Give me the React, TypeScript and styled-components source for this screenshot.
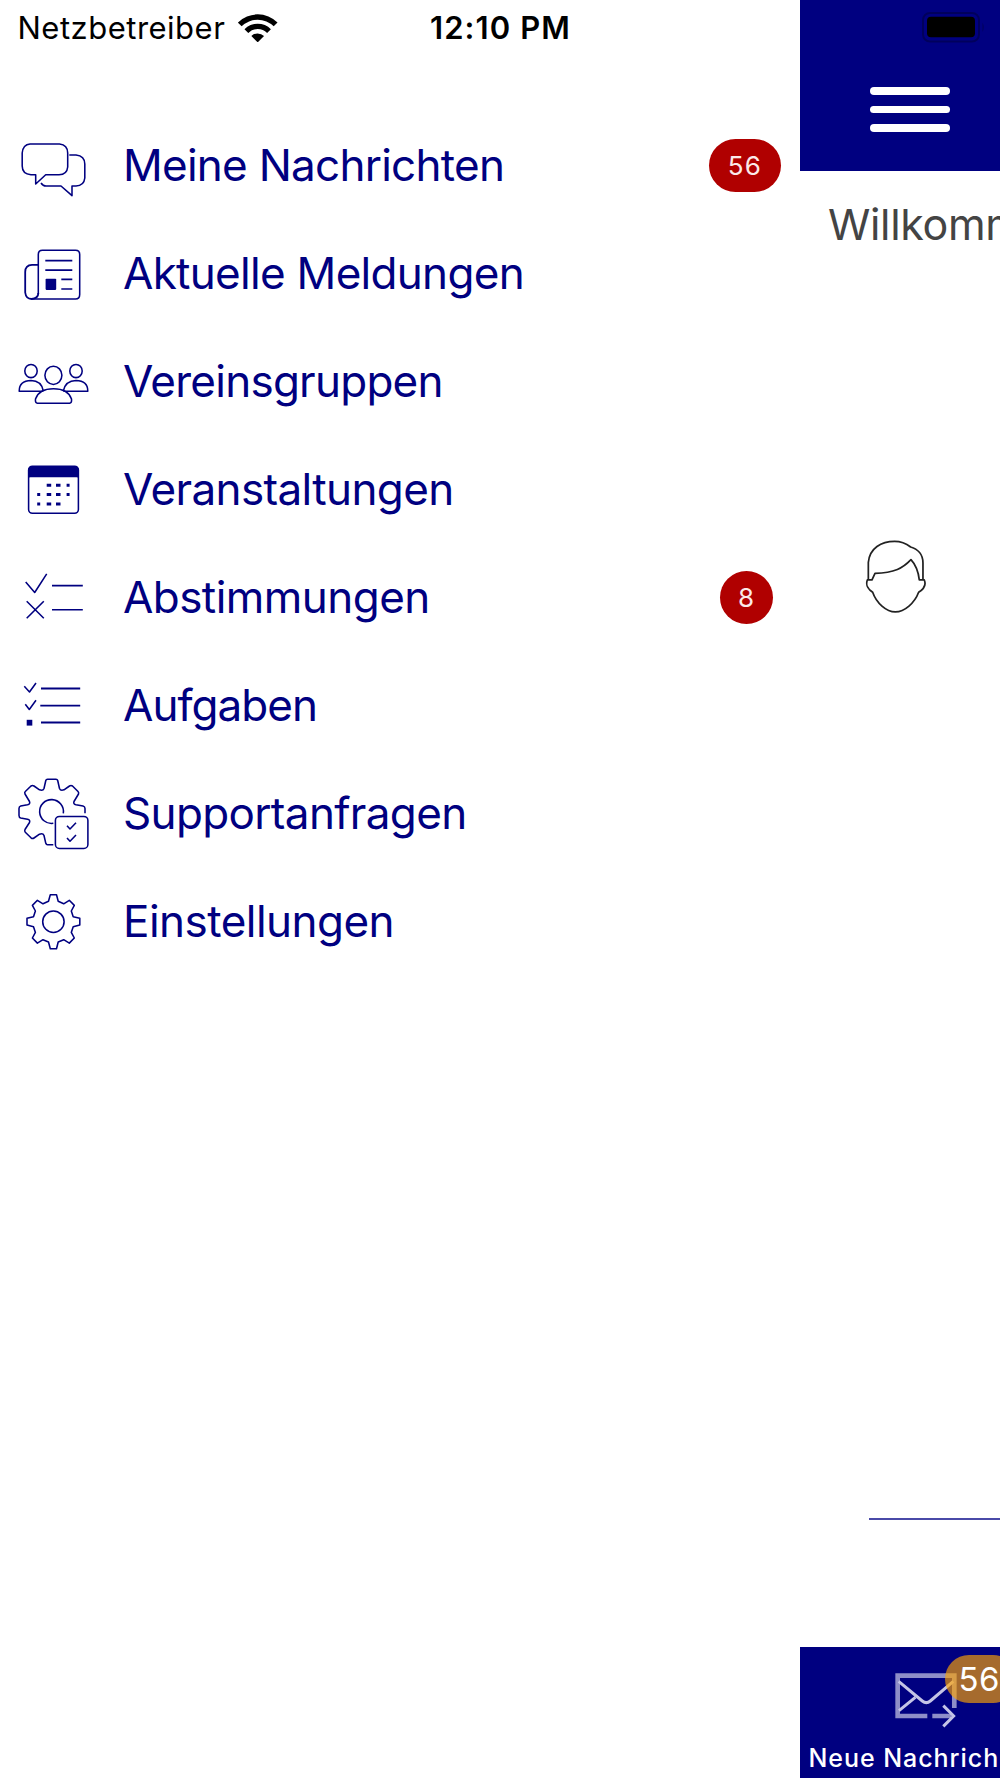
import React from 'react';
import styled, { createGlobalStyle } from 'styled-components';

const navy = '#000080';

const GlobalStyle = createGlobalStyle`
  * { box-sizing: border-box; }
  html, body { margin: 0; background: #fff; }
  body { font-family: Inter, "Noto Sans", sans-serif; }
`;

const Screen = styled.div`
  display: flex;
  width: 1000px;
  height: 1778px;
  overflow: hidden;
  background: #fff;
`;

const Drawer = styled.nav`
  flex: 0 0 800px;
  display: flex;
  flex-direction: column;
`;

const StatusBar = styled.div`
  display: grid;
  grid-template-columns: 412px 177px;
  justify-items: center;
  align-items: center;
  height: 56px;
  line-height: 56px;
  font-size: 31px;
  color: #000;
`;

const Carrier = styled.div`
  justify-self: start;
  display: flex;
  align-items: center;
  gap: 13px;
  padding-left: 17.5px;
  letter-spacing: 0.5px;
`;

const Clock = styled.time`
  font-weight: 600;
  letter-spacing: 1.1px;
  white-space: nowrap;
`;

const MenuList = styled.ul`
  list-style: none;
  margin: 56px 0 0;
  padding: 0;
`;

const MenuItem = styled.li`
  display: grid;
  grid-template-columns: 70px 1fr 72px;
  column-gap: 35px;
  align-items: center;
  height: 108px;
  padding: 0 19px 0 18px;
`;

const Icon = styled.svg`
  display: block;
  width: 70px;
  height: 70px;
  overflow: visible;
  fill: none;
  stroke: ${navy};
  stroke-width: 1.55;
  stroke-linejoin: round;
`;

const Label = styled.span<{ $tracking: number }>`
  padding-bottom: 2px;
  font-size: 44px;
  line-height: 54px;
  letter-spacing: ${(p) => p.$tracking}px;
  color: ${navy};
  white-space: nowrap;
`;

const Badge = styled.span<{ $single: boolean }>`
  justify-self: center;
  width: ${(p) => (p.$single ? 53.5 : 72)}px;
  height: 53.5px;
  margin: 0 0 1px ${(p) => (p.$single ? 3 : 0)}px;
  border-radius: 27px;
  background: #b00000;
  color: #fbe9e9;
  font-size: 26px;
  line-height: 54px;
  letter-spacing: ${(p) => (p.$single ? 0 : 1.4)}px;
  padding-right: ${(p) => (p.$single ? 1 : 0)}px;
  text-align: center;
`;

const Page = styled.main`
  flex: 0 0 200px;
  display: flex;
  flex-direction: column;
  overflow: hidden;
`;

const Header = styled.header`
  display: flex;
  flex-direction: column;
  flex: 0 0 171px;
  gap: 44px;
  padding: 12px 0 0 69.5px;
  background: ${navy};
`;

const Battery = styled.svg`
  display: block;
  width: 64px;
  height: 31px;
  margin-left: 52.5px;
`;

const Burger = styled.button`
  display: flex;
  flex-direction: column;
  gap: 11px;
  width: 80px;
  padding: 0;
  border: 0;
  background: none;
`;

const BurgerLine = styled.span`
  height: 7.7px;
  border-radius: 4px;
  background: #fff;
`;

const Content = styled.section`
  flex: 1;
  display: flex;
  flex-direction: column;
`;

const Welcome = styled.h1`
  margin: 26px 0 0 28px;
  font-size: 43px;
  font-weight: 400;
  line-height: 54px;
  letter-spacing: -0.35px;
  color: #444;
  white-space: nowrap;
`;

const Avatar = styled.svg`
  display: block;
  width: 61.3px;
  height: 73.3px;
  margin: 289.3px 0 0 65.3px;
  fill: none;
  stroke: #222;
  stroke-width: 5.2;
  stroke-linejoin: round;
`;

const Divider = styled.hr`
  width: 100%;
  height: 2px;
  margin: auto 0 127px 69px;
  border: 0;
  background: #4a4aa8;
`;

const Footer = styled.footer`
  display: flex;
  flex-direction: column;
  flex: 0 0 131px;
  background: ${navy};
`;

const MailAction = styled.div`
  position: relative;
  height: 92px;
  padding: 24.6px 0 0 93.6px;
`;

const MailIcon = styled.svg`
  display: block;
  width: 63.3px;
  height: 56px;
  fill: none;
  stroke: #8e8ec8;
  stroke-width: 14;
`;

const MailBadge = styled.span`
  position: absolute;
  left: 145px;
  top: 8px;
  width: 72px;
  height: 48px;
  padding-left: 13.5px;
  border-radius: 24px;
  background: rgba(255, 165, 0, 0.65);
  color: #fff;
  font-size: 33px;
  line-height: 49px;
  letter-spacing: 0.4px;
`;

const FooterLabel = styled.span`
  padding-left: 8.5px;
  font-size: 25px;
  font-weight: 500;
  line-height: 39px;
  letter-spacing: 0.95px;
  color: #fff;
  white-space: nowrap;
`;

const WifiIcon = () => (
  <svg width="39.4" height="28.7" viewBox="0 1 118 86">
    <path d="M-.4 26.6A84 84 0 0 1 118.4 26.6L107.1 37.9A68 68 0 0 0 10.9 37.9ZM19.4 46.4A56 56 0 0 1 98.6 46.4L87.3 57.7A40 40 0 0 0 30.7 57.7ZM40 67A27 27 0 0 1 78 67L59 86Z" />
  </svg>
);

const ChatIcon = () => (
  <Icon viewBox="0 0 70 70">
    <path d="M12 13H41.5Q49.7 14 49.7 22V36Q49 43.7 41 43.7H27.7L17.7 53V43.7H13Q4.2 43 4.2 35V22Q5 13.5 12 13Z" />
    <path d="M51.3 24H58Q66.8 25 66.8 33V47Q66 54.8 58 55H54V64.7L43 55H28Q25 55 23 52" />
  </Icon>
);

const NewsIcon = () => (
  <Icon viewBox="0 0 70 70">
    <path d="M20.3 55V15.5Q20.3 11.3 24.5 11.3H57.5Q61.7 11.3 61.7 15.5V55.5Q61.7 60 57.5 60H13.5" />
    <path d="M20.3 25.8H14Q7.2 26 7.2 33V53.5Q8 60 13.5 60Q20.3 59.5 20.3 54" strokeWidth="1.8" />
    <path d="M27.3 21.7H54.3M27.3 31.2H54.3M43.3 40.4H54.3M43.3 50H54.3" strokeWidth="1.7" />
    <rect x="27.6" y="39.7" width="10.6" height="11.2" rx=".8" fill={navy} stroke="none" />
  </Icon>
);

const GroupIcon = () => (
  <Icon viewBox="0 0 70 70">
    <ellipse cx="13" cy="24" rx="6.2" ry="6.6" />
    <ellipse cx="35.4" cy="28.3" rx="8.5" ry="9.1" />
    <ellipse cx="58" cy="24" rx="6.2" ry="6.6" />
    <path d="M25.3 44.2H1.2Q1.2 33.7 13 33.6Q23.5 33.8 25.3 44" />
    <path d="M45.3 44.2H69.8Q69.8 33.7 58 33.6Q47.5 33.8 45.3 44" />
    <path d="M19.5 56.2Q17 56 17.5 52Q21 41.7 35.5 41.7Q50 41.7 53.5 52Q54 56 51.5 56.2Z" />
  </Icon>
);

const CalendarIcon = () => (
  <Icon viewBox="0 0 70 70">
    <rect x="10.6" y="11.2" width="49.8" height="47" rx="3.8" />
    <path d="M10.3 23.5V15Q10.3 11 14.3 11H56.7Q60.7 11 60.7 15V23.5Q60.2 22.2 58.5 22.2H12.5Q10.8 22.2 10.3 23.5Z" fill={navy} stroke="none" />
    <path d="M28.7 30.2h4.5M38 30.2h4.5M48.6 30.2h3M19.2 39.5h3M28.7 39.5h4.5M38 39.5h4.5M48.6 39.5h3M19.2 49.1h3M28.7 49.1h4.5M38 49.1h4.5" strokeWidth="3" />
  </Icon>
);

const VoteIcon = () => (
  <Icon viewBox="0 0 70 70">
    <path d="M7.7 19L16.7 29.5L28.7 10.8M8.7 38.3L25.8 55.3M25.8 38.3L8.7 55.3M34 22.6H64.8M34 46.8H64.8" />
  </Icon>
);

const TaskIcon = () => (
  <Icon viewBox="0 0 70 70">
    <path d="M6.3 15.3L11.5 21L18 12M7.3 33.3L11.3 38.5L18 29.3M22.3 34.6H62.2" />
    <path d="M23 17.6H62.2M23 51.6H62.2" strokeWidth="2" />
    <rect x="8.7" y="48.8" width="5.6" height="5.8" fill={navy} stroke="none" />
  </Icon>
);

const SupportIcon = () => (
  <Icon viewBox="0 0 70 70">
    <path d="M67 34.3V29.5Q67 27.5 65 27L58 25.7Q55 25 56 22.5L60.5 15Q61 13.5 60 12.5L54.5 7Q53 6 51.5 7L46 10.8Q42.5 12 41.5 9.5L39.7 1.5Q39.3 .2 38 .2H29.5Q28.2 .2 27.8 1.5L26 9.5Q25 12 21.5 10.8L16 7Q14.5 6 13 7L7.3 12.5Q6.3 13.5 7 15L11.5 22.5Q12.5 25 9.5 25.7L2.7 27Q1 27.5 1 29.5V36.5Q1 38.5 2.7 39L9.5 40.3Q12.5 41 11.5 43.5L7 50.5Q6.3 52 7.3 53.2L13 58.8Q14.5 60 16 59L21.5 55.2Q25 54 26 56.5L27.8 64.3Q28.3 65.8 29.5 65.8H35.3" />
    <path d="M45.3 34.3A11.9 11.9 0 1 0 35.3 44.3" />
    <rect x="37.4" y="37.4" width="32.5" height="32" rx="4" />
    <path d="M49 46.7L52 50L58 43.7M49 59L52 62.3L58 56" />
  </Icon>
);

const GearIcon = () => (
  <Icon viewBox="0 0 70 70">
    <path d="M32.3 7.7H38.5L40.2 14.3L45.7 16.8L51.3 13.3L56.3 18.4L53.3 24L55.2 29.7L61.8 31.3V38L55.2 39.7L53.3 45.4L56.3 51L51.3 56.1L45.7 52.7L40.2 55L38.5 61.7H32.3L30.5 55L25 52.7L19.4 56.1L14.4 51L17.4 45.4L15.5 39.7L9 38V31.3L15.5 29.7L17.4 24L14.4 18.4L19.4 13.3L25 16.8L30.5 14.3Z" />
    <circle cx="35.4" cy="34.7" r="10.7" />
  </Icon>
);

const menu = [
  { label: 'Meine Nachrichten', tracking: -0.74, icon: ChatIcon, count: 56 },
  { label: 'Aktuelle Meldungen', tracking: -0.7, icon: NewsIcon },
  { label: 'Vereinsgruppen', tracking: -0.75, icon: GroupIcon },
  { label: 'Veranstaltungen', tracking: -0.62, icon: CalendarIcon },
  { label: 'Abstimmungen', tracking: -0.55, icon: VoteIcon, count: 8 },
  { label: 'Aufgaben', tracking: -0.95, icon: TaskIcon },
  { label: 'Supportanfragen', tracking: -0.65, icon: SupportIcon },
  { label: 'Einstellungen', tracking: -0.53, icon: GearIcon },
];

export default function App() {
  return (
    <Screen>
      <GlobalStyle />
      <Drawer>
        <StatusBar>
          <Carrier>
            Netzbetreiber
            <WifiIcon />
          </Carrier>
          <Clock>12:10 PM</Clock>
        </StatusBar>
        <MenuList>
          {menu.map(({ label, tracking, icon: ItemIcon, count }) => (
            <MenuItem key={label}>
              <ItemIcon />
              <Label $tracking={tracking}>{label}</Label>
              {count !== undefined && <Badge $single={count < 10}>{count}</Badge>}
            </MenuItem>
          ))}
        </MenuList>
      </Drawer>
      <Page>
        <Header>
          <Battery viewBox="0 0 64 31">
            <rect x="1" y="1" width="56" height="28.6" rx="7" fill="none" stroke="#00005c" strokeWidth="2" />
            <rect x="5" y="4.7" width="48" height="20.6" rx="4" fill="#000" />
            <path d="M60.5 10.5Q63 15.3 60.5 20Z" fill="#00005c" />
          </Battery>
          <Burger aria-label="Menü">
            <BurgerLine />
            <BurgerLine />
            <BurgerLine />
          </Burger>
        </Header>
        <Content>
          <Welcome>Willkommen</Welcome>
          <Avatar viewBox="256 61 184 220">
            <path d="M266 181V128C270 85 305 65 345 65C365 65 380 72 393 82C415 88 430 105 430 130V181H419C416 155 408 135 394 120C370 145 345 160 286 161L277 181H263C258 195 261 205 279 218C290 250 320 277 347 277C375 277 405 250 417 218C434 207 440 195 434 181H430" />
          </Avatar>
          <Divider />
        </Content>
        <Footer>
          <MailAction>
            <MailIcon viewBox="340 544 190 168">
              <path d="M440 676H351V555H521V652M455 676H512" />
              <path d="M354 572L425 631Q437 641 449 631L518 572M404 620L355 660M488 645L519 676L488 707" stroke="#c4c4e6" strokeWidth="9" />
            </MailIcon>
            <MailBadge>56</MailBadge>
          </MailAction>
          <FooterLabel>Neue Nachrich</FooterLabel>
        </Footer>
      </Page>
    </Screen>
  );
}
